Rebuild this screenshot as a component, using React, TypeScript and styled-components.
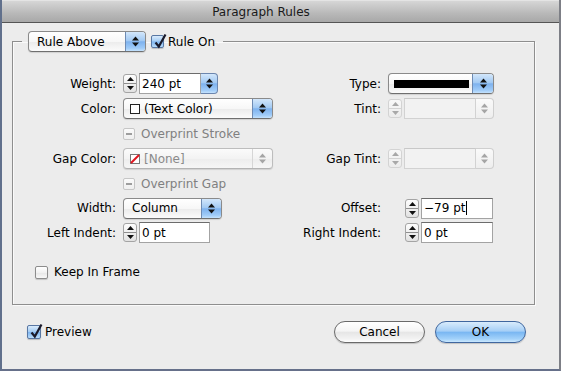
import React from "react";
import styled, { createGlobalStyle, css } from "styled-components";

const GlobalStyle = createGlobalStyle`
  html, body { margin: 0; padding: 0; background: #ececec; }
  body {
    font-family: "DejaVu Sans", "Liberation Sans", sans-serif;
    font-size: 12px;
    color: #000;
  }
  * { box-sizing: border-box; }
`;

const Window = styled.div`
  width: 561px;
  height: 371px;
  display: flex;
  flex-direction: column;
  background: #ececec;
  border-left: 2px solid #61708c;
  border-right: 2px solid #7d7f86;
  border-bottom: 2px solid #66708a;
`;

const TitleBar = styled.div`
  height: 23px;
  flex: none;
  display: flex;
  align-items: center;
  justify-content: center;
  padding-right: 39px;
  background: linear-gradient(#d6d6d6, #b8b8b8 60%, #a8a8a8);
  border-top: 1px solid #e4e4e4;
  border-bottom: 1px solid #555;
  color: #1a1a1a;
  font-size: 12px;
`;

const Body = styled.div`
  flex: 1;
  display: flex;
  flex-direction: column;
  padding: 8px 24px 0 10px;
`;

const Group = styled.fieldset`
  margin: 0;
  padding: 0 0 22px 0;
  min-width: 0;
  border: 1px solid #8e8e8e;
  box-shadow: inset 1px 1px 0 #fafafa, 1px 1px 0 #fafafa;
`;

const Legend = styled.legend`
  margin-left: 9px;
  padding: 0 8px 0 6px;
`;

const LegendRow = styled.div`
  display: flex;
  align-items: center;
  gap: 5px;
`;

const FormGrid = styled.div`
  display: grid;
  grid-template-columns: 110px 150px 115px 1fr;
  grid-template-rows: 25px 25px 25px 25px 25px 24px 25px;
  align-items: center;
  padding-top: 19px;
`;

const Label = styled.div`
  text-align: right;
  padding-right: 7px;
  white-space: nowrap;
`;

const Cell = styled.div<{ $indent?: number }>`
  display: flex;
  align-items: center;
  gap: 2px;
  margin-left: ${(p) => p.$indent ?? 0}px;
`;

const KeepRow = styled.div`
  margin: 20px 0 0 22px;
`;

/* ---------- arrows ---------- */

function UpDown({ color }: { color: string }) {
  return (
    <svg width="7" height="11" viewBox="0 0 7 11">
      <polygon points="0,4.5 3.5,0.5 7,4.5" fill={color} />
      <polygon points="0,6.5 3.5,10.5 7,6.5" fill={color} />
    </svg>
  );
}

/* ---------- popup button ---------- */

const PopupBox = styled.div<{ $width: number; $disabled?: boolean }>`
  width: ${(p) => p.$width}px;
  height: 21px;
  display: flex;
  border-radius: 4px;
  overflow: hidden;
  border: 1px solid ${(p) => (p.$disabled ? "#bdbdbd" : "#8a8a8a")};
  border-bottom-color: ${(p) => (p.$disabled ? "#b3b3b3" : "#6f6f6f")};
  background: ${(p) =>
    p.$disabled
      ? "linear-gradient(#fbfbfb, #f3f3f3 50%, #ededed 51%, #f6f6f6)"
      : "linear-gradient(#ffffff, #f7f7f7 50%, #ebebeb 51%, #fbfbfb)"};
  box-shadow: 0 1px 1px rgba(0, 0, 0, 0.12);
  flex: none;
`;

const PopupValue = styled.div<{ $pad: number; $disabled?: boolean }>`
  flex: 1;
  display: flex;
  align-items: center;
  gap: 4px;
  padding-left: ${(p) => p.$pad}px;
  white-space: nowrap;
  overflow: hidden;
  color: ${(p) => (p.$disabled ? "#8a8a8a" : "#000")};
`;

const blueArrow = css`
  background: linear-gradient(#d3e7fb, #a3caf3 45%, #7eb2ee 52%, #9fcbf8 85%, #c4e2fd);
`;

const PopupArrowZone = styled.div<{ $width: number; $disabled?: boolean }>`
  width: ${(p) => p.$width}px;
  flex: none;
  display: flex;
  align-items: center;
  justify-content: center;
  border-left: 1px solid ${(p) => (p.$disabled ? "#d6d6d6" : "#6e8bb3")};
  ${(p) => (p.$disabled ? "" : blueArrow)}
`;

function Popup({
  width,
  disabled,
  pad = 8,
  arrow = 20,
  children,
}: {
  width: number;
  disabled?: boolean;
  pad?: number;
  arrow?: number;
  children: React.ReactNode;
}) {
  return (
    <PopupBox $width={width} $disabled={disabled}>
      <PopupValue $pad={pad} $disabled={disabled}>
        {children}
      </PopupValue>
      <PopupArrowZone $width={arrow} $disabled={disabled}>
        <UpDown color={disabled ? "#a5a5a5" : "#111"} />
      </PopupArrowZone>
    </PopupBox>
  );
}

/* ---------- swatches ---------- */

const Swatch = styled.span`
  width: 10px;
  height: 10px;
  flex: none;
  border: 1px solid #222;
  background: #fff;
`;

const NoneSwatch = styled.svg`
  flex: none;
`;

const StrokeSample = styled.span`
  width: 75px;
  height: 8px;
  background: #000;
  flex: none;
`;

/* ---------- stepper ---------- */

const StepperBox = styled.div<{ $disabled?: boolean }>`
  width: 14px;
  height: 19px;
  flex: none;
  display: flex;
  flex-direction: column;
  border: 1px solid ${(p) => (p.$disabled ? "#d3d3d3" : "#a4a4a4")};
  border-radius: 3px;
  background: ${(p) =>
    p.$disabled ? "linear-gradient(#f8f8f8, #ececec)" : "linear-gradient(#fdfdfd, #e2e2e2)"};
`;

const StepHalf = styled.div<{ $disabled?: boolean; $top?: boolean }>`
  flex: 1;
  display: flex;
  align-items: center;
  justify-content: center;
  ${(p) => (p.$top ? `border-bottom: 1px solid ${p.$disabled ? "#d3d3d3" : "#8f8f8f"};` : "")}
`;

function Stepper({ disabled }: { disabled?: boolean }) {
  const c = disabled ? "#a8a8a8" : "#111";
  return (
    <StepperBox $disabled={disabled}>
      <StepHalf $top $disabled={disabled}>
        <svg width="7" height="4" viewBox="0 0 7 4">
          <polygon points="0,4 3.5,0 7,4" fill={c} />
        </svg>
      </StepHalf>
      <StepHalf $disabled={disabled}>
        <svg width="7" height="4" viewBox="0 0 7 4">
          <polygon points="0,0 3.5,4 7,0" fill={c} />
        </svg>
      </StepHalf>
    </StepperBox>
  );
}

/* ---------- text fields ---------- */

const TextBox = styled.div<{ $width?: number; $disabled?: boolean }>`
  ${(p) => (p.$width ? `width: ${p.$width}px;` : "flex: 1;")}
  height: 21px;
  display: flex;
  align-items: center;
  padding-left: 2px;
  background: ${(p) => (p.$disabled ? "#f2f2f2" : "#fff")};
  border: 1px solid ${(p) => (p.$disabled ? "#d2d2d2" : "#a3a3a3")};
  border-top-color: ${(p) => (p.$disabled ? "#c8c8c8" : "#6c6c6c")};
  white-space: nowrap;
  flex-shrink: 0;
`;

const Caret = styled.span`
  display: inline-block;
  width: 1px;
  height: 14px;
  background: #000;
  margin-left: 1px;
`;

const ComboBox = styled.div<{ $width: number }>`
  width: ${(p) => p.$width}px;
  height: 21px;
  display: flex;
  flex: none;
`;

const ComboArrow = styled.div<{ $width: number; $disabled?: boolean }>`
  width: ${(p) => p.$width}px;
  flex: none;
  display: flex;
  align-items: center;
  justify-content: center;
  border: 1px solid ${(p) => (p.$disabled ? "#cfcfcf" : "#6c86ae")};
  border-left: none;
  border-radius: 0 4px 4px 0;
  background: ${(p) => (p.$disabled ? "linear-gradient(#fafafa, #eeeeee)" : "")};
  ${(p) => (p.$disabled ? "" : blueArrow)}
`;

function Combo({
  width,
  disabled,
  arrow,
  children,
}: {
  width: number;
  disabled?: boolean;
  arrow: number;
  children?: React.ReactNode;
}) {
  return (
    <ComboBox $width={width}>
      <TextBox $disabled={disabled}>{children}</TextBox>
      <ComboArrow $width={arrow} $disabled={disabled}>
        <UpDown color={disabled ? "#a5a5a5" : "#111"} />
      </ComboArrow>
    </ComboBox>
  );
}

/* ---------- checkboxes ---------- */

const CheckLabel = styled.label<{ $gap: number; $disabled?: boolean }>`
  display: inline-flex;
  align-items: center;
  gap: ${(p) => p.$gap}px;
  white-space: nowrap;
  color: ${(p) => (p.$disabled ? "#808080" : "#000")};
`;

const Box = styled.span<{ $size: number; $kind: "checked" | "empty" | "mixedOff" }>`
  position: relative;
  width: ${(p) => p.$size}px;
  height: ${(p) => p.$size}px;
  flex: none;
  border-radius: 2px;
  display: inline-flex;
  align-items: center;
  justify-content: center;
  ${(p) =>
    p.$kind === "checked"
      ? css`
          border: 1px solid #5877a3;
          background: linear-gradient(#d9ebfc, #a3cbf3 48%, #7db4ef 52%, #b9ddfc);
          box-shadow: 0 1px 1px rgba(0, 0, 0, 0.2);
        `
      : p.$kind === "empty"
      ? css`
          border: 1px solid #8c8c8c;
          background: linear-gradient(#ffffff, #f1f1f1 50%, #e6e6e6 51%, #f8f8f8);
          box-shadow: 0 1px 1px rgba(0, 0, 0, 0.18);
        `
      : css`
          border: 1px solid #c6c6c6;
          background: linear-gradient(#fafafa, #efefef);
        `}
`;

const CheckMark = styled.svg`
  position: absolute;
  left: 1px;
  top: -3px;
`;

const Dash = styled.span`
  width: 6px;
  height: 2px;
  background: #9d9d9d;
`;

function Checkbox({ kind, size = 13 }: { kind: "checked" | "empty" | "mixedOff"; size?: number }) {
  return (
    <Box $size={size} $kind={kind}>
      {kind === "checked" && (
        <CheckMark width="14" height="16" viewBox="0 0 14 16">
          <path d="M2.5 9.5 L5.8 13.5 L12.5 1.5" fill="none" stroke="#1a1a2a" strokeWidth="2.2" />
        </CheckMark>
      )}
      {kind === "mixedOff" && <Dash />}
    </Box>
  );
}

/* ---------- footer ---------- */

const Footer = styled.div`
  display: flex;
  align-items: center;
  justify-content: space-between;
  margin-top: 16px;
  padding: 0 9px 0 15px;
`;

const Buttons = styled.div`
  display: flex;
  gap: 10px;
`;

const PushButton = styled.button<{ $primary?: boolean }>`
  width: 91px;
  height: 22px;
  border-radius: 11px;
  font-family: inherit;
  font-size: 12px;
  color: #000;
  padding: 0;
  border: 1px solid ${(p) => (p.$primary ? "#40679f" : "#6a6a6a")};
  background: ${(p) =>
    p.$primary
      ? "linear-gradient(#d9ecfc, #a6cff6 45%, #7ab7f2 52%, #a3d2fa 85%, #cbe8fe)"
      : "linear-gradient(#ffffff, #f5f5f5 45%, #e6e6e6 52%, #f3f3f3 85%, #ffffff)"};
  box-shadow: 0 1px 1px rgba(0, 0, 0, 0.18);
`;

export default function App() {
  return (
    <>
      <GlobalStyle />
      <Window>
        <TitleBar>Paragraph Rules</TitleBar>
        <Body>
          <Group>
            <Legend>
              <LegendRow>
                <Popup width={118}>Rule Above</Popup>
                <CheckLabel $gap={4}>
                  <Checkbox kind="checked" size={13} />
                  Rule On
                </CheckLabel>
              </LegendRow>
            </Legend>
            <FormGrid>
              <Label>Weight:</Label>
              <Cell>
                <Stepper />
                <Combo width={79} arrow={17}>
                  240 pt
                </Combo>
              </Cell>
              <Label>Type:</Label>
              <Cell>
                <Popup width={106} pad={5} arrow={21}>
                  <StrokeSample />
                </Popup>
              </Cell>

              <Label>Color:</Label>
              <Cell>
                <Popup width={150} pad={6}>
                  <Swatch />
                  (Text Color)
                </Popup>
              </Cell>
              <Label>Tint:</Label>
              <Cell>
                <Stepper disabled />
                <Combo width={90} arrow={18} disabled />
              </Cell>

              <span />
              <Cell>
                <CheckLabel $gap={6} $disabled>
                  <Checkbox kind="mixedOff" size={12} />
                  Overprint Stroke
                </CheckLabel>
              </Cell>
              <span />
              <span />

              <Label>Gap Color:</Label>
              <Cell>
                <Popup width={150} pad={6} disabled>
                  <NoneSwatch width="10" height="10" viewBox="0 0 10 10">
                    <rect x="0.5" y="0.5" width="9" height="9" fill="#fff" stroke="#777" />
                    <line x1="1" y1="9" x2="9" y2="1" stroke="#e0141e" strokeWidth="2" />
                  </NoneSwatch>
                  [None]
                </Popup>
              </Cell>
              <Label>Gap Tint:</Label>
              <Cell>
                <Stepper disabled />
                <Combo width={90} arrow={18} disabled />
              </Cell>

              <span />
              <Cell>
                <CheckLabel $gap={6} $disabled>
                  <Checkbox kind="mixedOff" size={12} />
                  Overprint Gap
                </CheckLabel>
              </Cell>
              <span />
              <span />

              <Label>Width:</Label>
              <Cell>
                <Popup width={99} pad={8}>
                  Column
                </Popup>
              </Cell>
              <Label>Offset:</Label>
              <Cell $indent={17}>
                <Stepper />
                <TextBox $width={72}>
                  −79 pt
                  <Caret />
                </TextBox>
              </Cell>

              <Label>Left Indent:</Label>
              <Cell>
                <Stepper />
                <TextBox $width={71}>0 pt</TextBox>
              </Cell>
              <Label>Right Indent:</Label>
              <Cell $indent={17}>
                <Stepper />
                <TextBox $width={72}>0 pt</TextBox>
              </Cell>
            </FormGrid>
            <KeepRow>
              <CheckLabel $gap={6}>
                <Checkbox kind="empty" size={13} />
                Keep In Frame
              </CheckLabel>
            </KeepRow>
          </Group>
          <Footer>
            <CheckLabel $gap={4}>
              <Checkbox kind="checked" size={14} />
              Preview
            </CheckLabel>
            <Buttons>
              <PushButton>Cancel</PushButton>
              <PushButton $primary>OK</PushButton>
            </Buttons>
          </Footer>
        </Body>
      </Window>
    </>
  );
}
